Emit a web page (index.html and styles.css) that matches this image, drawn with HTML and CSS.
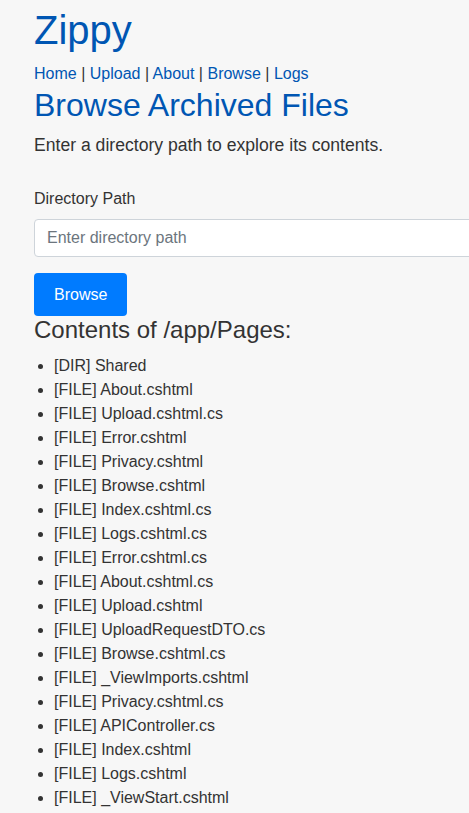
FILE: index.html
```html
<!DOCTYPE html>
<html lang="en">
<head>
<meta charset="utf-8">
<title>Browse - Zippy</title>
<link rel="stylesheet" href="styles.css">
</head>
<body>
<div class="page">
  <header class="site-header">
    <h1 class="brand"><a href="#">Zippy</a></h1>
    <nav class="nav">
      <a href="#">Home</a> | <a href="#">Upload</a> | <a href="#">About</a> | <a href="#">Browse</a> | <a href="#">Logs</a>
    </nav>
  </header>
  <main>
    <h2 class="title">Browse Archived Files</h2>
    <p class="lead">Enter a directory path to explore its contents.</p>
    <form class="browse-form">
      <label class="form-label" for="path">Directory Path</label>
      <input class="form-control" id="path" type="text" placeholder="Enter directory path">
      <button class="btn" type="button">Browse</button>
    </form>
    <h3 class="contents-title">Contents of /app/Pages:</h3>
    <ul class="file-list">
      <li>[DIR] Shared</li>
      <li>[FILE] About.cshtml</li>
      <li>[FILE] Upload.cshtml.cs</li>
      <li>[FILE] Error.cshtml</li>
      <li>[FILE] Privacy.cshtml</li>
      <li>[FILE] Browse.cshtml</li>
      <li>[FILE] Index.cshtml.cs</li>
      <li>[FILE] Logs.cshtml.cs</li>
      <li>[FILE] Error.cshtml.cs</li>
      <li>[FILE] About.cshtml.cs</li>
      <li>[FILE] Upload.cshtml</li>
      <li>[FILE] UploadRequestDTO.cs</li>
      <li>[FILE] Browse.cshtml.cs</li>
      <li>[FILE] _ViewImports.cshtml</li>
      <li>[FILE] Privacy.cshtml.cs</li>
      <li>[FILE] APIController.cs</li>
      <li>[FILE] Index.cshtml</li>
      <li>[FILE] Logs.cshtml</li>
      <li>[FILE] _ViewStart.cshtml</li>
    </ul>
  </main>
</div>
</body>
</html>
```
FILE: styles.css
```css
html, body {
  overflow-x: hidden;
}
body {
  margin: 0;
  background: #f7f7f7;
  color: #333333;
  font-family: "Liberation Sans", Arial, sans-serif;
  font-size: 16px;
  line-height: 1.5;
}
.page {
  width: 560px;
  padding: 6px 0 0 34px;
}
a {
  color: #0056b3;
  text-decoration: none;
}
.brand {
  margin: 0 0 8px;
  font-size: 40px;
  font-weight: 400;
  line-height: 1.2;
}
.nav {
  line-height: 24px;
}
.title {
  margin: 0 0 8px;
  font-size: 32px;
  font-weight: 400;
  line-height: 1.2;
  color: #0056b3;
}
.lead {
  margin: 0;
  font-size: 17.6px;
  line-height: 1.5;
}
.browse-form {
  margin: 28px 0 0;
}
.form-label {
  display: block;
  margin-bottom: 8px;
  line-height: 24px;
}
.form-control {
  display: block;
  box-sizing: border-box;
  width: 100%;
  height: 38px;
  margin: 0 0 16px;
  padding: 6px 12px;
  border: 1px solid #ced4da;
  border-radius: 4px;
  background: #ffffff;
  font-family: inherit;
  font-size: 16px;
  color: #495057;
}
.form-control::placeholder {
  color: #6c757d;
}
.btn {
  display: block;
  box-sizing: border-box;
  height: 43px;
  padding: 0 20px;
  border: 0;
  border-radius: 4px;
  background: #007bff;
  color: #ffffff;
  font-family: inherit;
  font-size: 16px;
  line-height: 43px;
}
.contents-title {
  margin: 0 0 9px;
  font-size: 24px;
  font-weight: 400;
  line-height: 1.2;
}
.file-list {
  margin: 0 0 16px;
  padding-left: 20px;
}
.file-list li {
  line-height: 24px;
}
```
